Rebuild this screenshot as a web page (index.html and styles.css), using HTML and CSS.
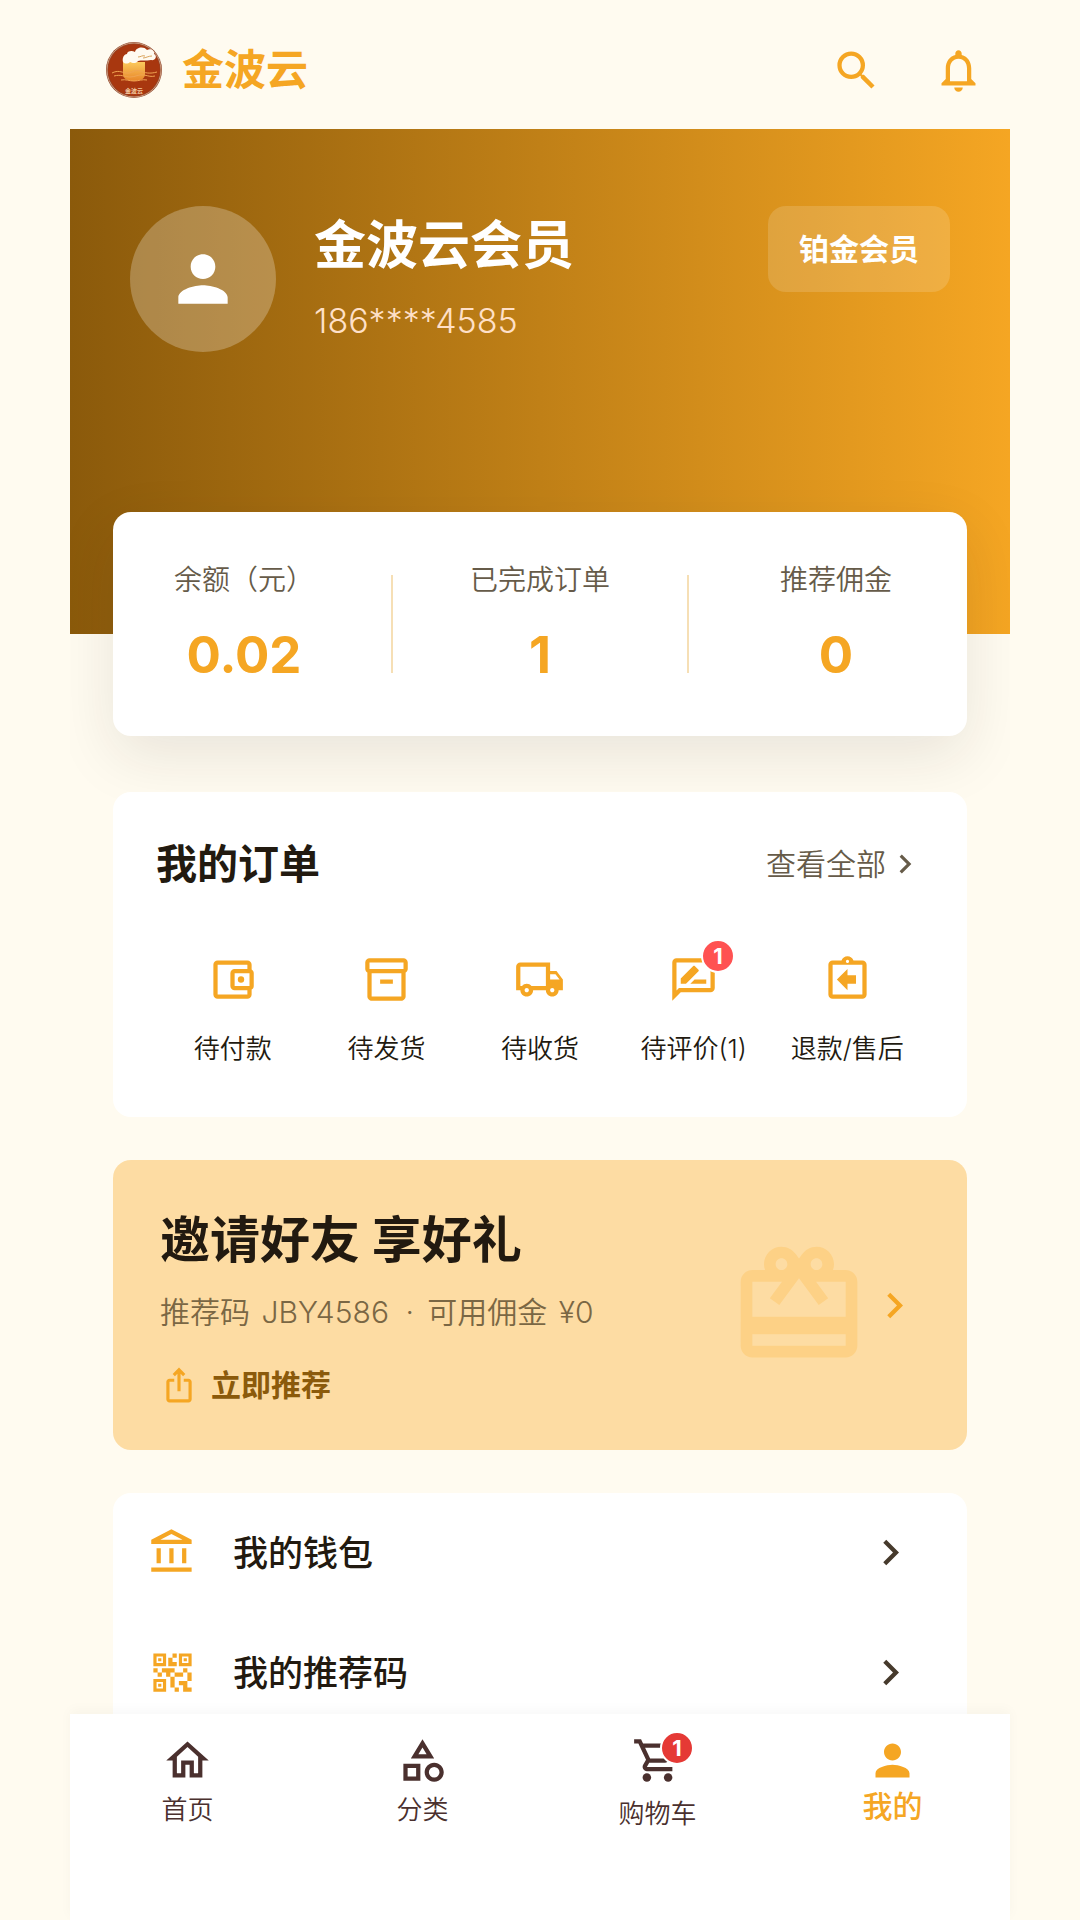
FILE: index.html
```html
<!DOCTYPE html>
<html lang="zh-CN">
<head>
<meta charset="utf-8">
<meta name="viewport" content="width=device-width, initial-scale=1">
<title>金波云 - 我的</title>
<link rel="stylesheet" href="styles.css">
</head>
<body>
<div class="app">
  <header class="topbar">
    <svg class="logo" viewBox="0 0 56 56" aria-hidden="true">
      <defs>
        <linearGradient id="sun" x1="0" y1="0" x2="0" y2="1">
          <stop offset="0" stop-color="#fbc95c"/>
          <stop offset="1" stop-color="#e8872a"/>
        </linearGradient>
      </defs>
      <circle cx="28" cy="28" r="28" fill="#8f4a30"/>
      <circle cx="28" cy="28" r="27" fill="none" stroke="#d09a7c" stroke-width="1"/>
      <circle cx="28" cy="28" r="26" fill="#a8370f"/>
      <path d="M17 20h22v12c0 5-5 7-11 7s-11-2-11-7z" fill="url(#sun)"/>
      <path d="M17 20c-1-4 1-8 4-8 0-3 5-4 8-2 1-5 9-6 12-2 4-2 8 1 7 4 4 2 1 7-3 6-5 1-10 0-13 1-2 3-6 2-8 1-2 2-5 2-7 0z" fill="#fffaf0"/>
      <path d="M32 15c3 0 4-2 7-1m-2 2c3 0 5-2 9-2" fill="none" stroke="#d9a35c" stroke-width="1"/>
      <path d="M6 31c6-3 9-1 14 0 6 1 8-4 14-2 5 2 10 3 17 1M8 34c7-2 11 1 16 1 6 0 8-3 14-2 5 1 7 2 11 1M15 38c5-1 8 1 13 1s8-2 13-1" fill="none" stroke="#f0a452" stroke-width="1"/>
      <text class="logo-text" x="28" y="51" text-anchor="middle">金波云</text>
    </svg>
    <span class="brand">金波云</span>
    <div class="topbar-actions">
      <button class="icon-btn" type="button" aria-label="搜索">
        <svg class="icon" viewBox="0 0 24 24"><path d="M15.5 14h-.79l-.28-.27A6.47 6.47 0 0 0 16 9.5 6.5 6.5 0 1 0 9.5 16c1.61 0 3.09-.59 4.23-1.57l.27.28v.79l5 4.99L20.49 19l-4.99-5zm-6 0C7.01 14 5 11.99 5 9.5S7.01 5 9.5 5 14 7.01 14 9.5 11.99 14 9.5 14z"/></svg>
      </button>
      <button class="icon-btn" type="button" aria-label="通知">
        <svg class="icon" viewBox="0 0 24 24"><path d="M12 22c1.1 0 2-.9 2-2h-4c0 1.1.9 2 2 2zm6-6v-5c0-3.07-1.63-5.64-4.5-6.32V4c0-.83-.67-1.5-1.5-1.5s-1.5.67-1.5 1.5v.68C7.64 5.36 6 7.92 6 11v5l-2 2v1h16v-1l-2-2zm-2 1H8v-6c0-2.48 1.51-4.5 4-4.5s4 2.02 4 4.5v6z"/></svg>
      </button>
    </div>
  </header>

  <main class="content">
    <section class="hero">
      <div class="avatar">
        <svg viewBox="0 0 24 24" aria-hidden="true"><path d="M12 12c2.21 0 4-1.79 4-4s-1.79-4-4-4-4 1.79-4 4 1.79 4 4 4zm0 2c-2.67 0-8 1.34-8 4v2h16v-2c0-2.66-5.33-4-8-4z"/></svg>
      </div>
      <div class="profile">
        <h1 class="profile-name">金波云会员</h1>
        <p class="profile-phone">186****4585</p>
      </div>
      <span class="level">铂金会员</span>
    </section>

    <section class="card stats">
      <div class="stat"><span class="stat-label">余额（元）</span><strong class="stat-value">0.02</strong></div>
      <span class="stat-divider"></span>
      <div class="stat"><span class="stat-label">已完成订单</span><strong class="stat-value">1</strong></div>
      <span class="stat-divider"></span>
      <div class="stat"><span class="stat-label">推荐佣金</span><strong class="stat-value">0</strong></div>
    </section>

    <section class="card orders">
      <div class="orders-head">
        <h2 class="orders-title">我的订单</h2>
        <a class="orders-more" href="#">查看全部
          <svg viewBox="0 0 24 24" aria-hidden="true"><path d="M10 6L8.59 7.41 13.17 12l-4.58 4.59L10 18l6-6z"/></svg>
        </a>
      </div>
      <nav class="orders-grid">
        <a class="order-item" href="#">
          <svg class="icon" viewBox="0 0 24 24" aria-hidden="true"><path d="M21 7.28V5c0-1.1-.9-2-2-2H5c-1.11 0-2 .9-2 2v14c0 1.1.89 2 2 2h14c1.1 0 2-.9 2-2v-2.28c.59-.35 1-.98 1-1.72V9c0-.74-.41-1.37-1-1.72zM20 9v6h-7V9h7zM5 19V5h14v2h-6c-1.1 0-2 .9-2 2v6c0 1.1.9 2 2 2h6v2H5z"/><circle cx="16" cy="12" r="1.5"/></svg>
          <span>待付款</span>
        </a>
        <a class="order-item" href="#">
          <svg class="icon" viewBox="0 0 24 24" aria-hidden="true"><path d="M20 2H4c-1 0-2 .9-2 2v3.01c0 .72.43 1.34 1 1.69V20c0 1.1 1.1 2 2 2h14c.9 0 2-.9 2-2V8.7c.57-.35 1-.97 1-1.69V4c0-1.1-1-2-2-2zm-1 18H5V9h14v11zm1-13H4V4h16v3z"/><path d="M9 12h6v2H9z"/></svg>
          <span>待发货</span>
        </a>
        <a class="order-item" href="#">
          <svg class="icon" viewBox="0 0 24 24" aria-hidden="true"><path d="M20 8h-3V4H3c-1.1 0-2 .9-2 2v11h2c0 1.66 1.34 3 3 3s3-1.34 3-3h6c0 1.66 1.34 3 3 3s3-1.34 3-3h2v-5l-3-4zm-.5 1.5l1.96 2.5H17V9.5h2.5zM6 18c-.55 0-1-.45-1-1s.45-1 1-1 1 .45 1 1-.45 1-1 1zm2.22-3c-.55-.61-1.33-1-2.22-1s-1.67.39-2.22 1H3V6h12v9H8.22zM18 18c-.55 0-1-.45-1-1s.45-1 1-1 1 .45 1 1-.45 1-1 1z"/></svg>
          <span>待收货</span>
        </a>
        <a class="order-item" href="#">
          <span class="badge-anchor">
            <svg class="icon" viewBox="0 0 24 24" aria-hidden="true"><path d="M20 2H4c-1.1 0-1.99.9-1.99 2L2 22l4-4h14c1.1 0 2-.9 2-2V4c0-1.1-.9-2-2-2zm0 14H5.17L4 17.17V4h16v12zM10.5 14H18v-2h-5.5zm3.86-5.87c.2-.2.2-.51 0-.71l-1.77-1.77c-.2-.2-.51-.2-.71 0L6 11.53V14h2.47l5.89-5.87z"/></svg>
            <b class="badge badge-order">1</b>
          </span>
          <span>待评价(1)</span>
        </a>
        <a class="order-item" href="#">
          <svg class="icon" viewBox="0 0 24 24" aria-hidden="true"><path d="M16 10h-4V7l-5 5 5 5v-3h4z"/><path d="M19 3h-4.18C14.4 1.84 13.3 1 12 1s-2.4.84-2.82 2H5c-1.1 0-2 .9-2 2v14c0 1.1.9 2 2 2h14c1.1 0 2-.9 2-2V5c0-1.1-.9-2-2-2zm-7-.25c.41 0 .75.34.75.75s-.34.75-.75.75-.75-.34-.75-.75.34-.75.75-.75zM19 19H5V5h14v14z"/></svg>
          <span>退款/售后</span>
        </a>
      </nav>
    </section>

    <a class="card invite" href="#">
      <div class="invite-body">
        <h2 class="invite-title">邀请好友 享好礼</h2>
        <p class="invite-sub">推荐码 <span class="invite-code">JBY4586</span> <span class="invite-dot">·</span> 可用佣金 <span class="invite-code">¥0</span></p>
        <span class="invite-action">
          <svg viewBox="0 0 24 24" aria-hidden="true"><path d="M16 5l-1.42 1.42-1.59-1.59V16h-1.98V4.83L9.42 6.42 8 5l4-4 4 4zm4 5v11c0 1.1-.9 2-2 2H6c-1.11 0-2-.9-2-2V10c0-1.11.89-2 2-2h3v2H6v11h12V10h-3V8h3c1.1 0 2 .89 2 2z"/></svg>
          立即推荐
        </span>
      </div>
      <svg class="invite-gift" viewBox="0 0 24 24" aria-hidden="true"><path d="M20 6h-2.18c.11-.31.18-.65.18-1 0-1.66-1.34-3-3-3-1.05 0-1.96.54-2.5 1.35l-.5.67-.5-.68C10.96 2.54 10.05 2 9 2 7.34 2 6 3.34 6 5c0 .35.07.69.18 1H4c-1.11 0-1.99.89-1.99 2L2 19c0 1.11.89 2 2 2h16c1.11 0 2-.89 2-2V8c0-1.11-.89-2-2-2zm-5-2c.55 0 1 .45 1 1s-.45 1-1 1-1-.45-1-1 .45-1 1-1zM9 4c.55 0 1 .45 1 1s-.45 1-1 1-1-.45-1-1 .45-1 1-1zm11 15H4v-2h16v2zm0-5H4V8h5.08L7 10.83 8.62 12 12 7.4l3.38 4.6L17 10.83 14.92 8H20v6z"/></svg>
      <svg class="icon" viewBox="0 0 24 24" aria-hidden="true"><path d="M10 6L8.59 7.41 13.17 12l-4.58 4.59L10 18l6-6z"/></svg>
    </a>

    <section class="card menu">
      <a class="menu-row" href="#">
        <svg class="icon" viewBox="0 0 24 24" aria-hidden="true"><path d="M6.5 10h-2v7h2v-7zm6 0h-2v7h2v-7zm8.5 9H2v2h19v-2zm-2.5-9h-2v7h2v-7zm-7-6.74L16.71 6H6.29l5.21-2.74m0-2.26L2 6v2h19V6l-9.5-5z"/></svg>
        <span class="menu-label">我的钱包</span>
        <svg class="icon menu-arrow" viewBox="0 0 24 24" aria-hidden="true"><path d="M10 6L8.59 7.41 13.17 12l-4.58 4.59L10 18l6-6z"/></svg>
      </a>
      <a class="menu-row" href="#">
        <svg class="icon" viewBox="0 0 24 24" aria-hidden="true"><path d="M15 21h-2v-2h2v2zm-2-7h-2v5h2v-5zm8-2h-2v4h2v-4zm-2-2h-2v2h2v-2zM7 12H5v2h2v-2zm-2-2H3v2h2v-2zm7-5h2V3h-2v2zm-7.5-.5v3h3v-3h-3zM9 9H3V3h6v6zm-4.5 7.5v3h3v-3h-3zM9 21H3v-6h6v6zm7.5-16.5v3h3v-3h-3zM21 9h-6V3h6v6zm-2 10v-3h-4v2h2v3h4v-2h-2zm-2-7h-4v2h4v-2zm-4-2H7v2h2v2h2v-2h2v-2zm1-1V7h-2V5h-2v4h4zM6.75 5.25h-1.5v1.5h1.5v-1.5zm0 12h-1.5v1.5h1.5v-1.5zm12-12h-1.5v1.5h1.5v-1.5z"/></svg>
        <span class="menu-label">我的推荐码</span>
        <svg class="icon menu-arrow" viewBox="0 0 24 24" aria-hidden="true"><path d="M10 6L8.59 7.41 13.17 12l-4.58 4.59L10 18l6-6z"/></svg>
      </a>
    </section>
  </main>

  <nav class="tabbar">
    <a class="tab" href="#">
      <svg class="icon" viewBox="0 0 24 24" aria-hidden="true"><path d="M12 5.69l5 4.5V18h-2v-6H9v6H7v-7.81l5-4.5M12 3L2 12h3v8h6v-6h2v6h6v-8h3L12 3z"/></svg>
      <span>首页</span>
    </a>
    <a class="tab" href="#">
      <svg class="icon" viewBox="0 0 24 24" aria-hidden="true"><path d="M12 2l-5.5 9h11L12 2zm0 3.84L13.93 9h-3.87L12 5.84zM17.5 13c-2.49 0-4.5 2.01-4.5 4.5s2.01 4.5 4.5 4.5 4.5-2.01 4.5-4.5-2.01-4.5-4.5-4.5zm0 7a2.5 2.5 0 0 1 0-5 2.5 2.5 0 0 1 0 5zM3 21.500h8v-8H3v8zm2-6h4v4H5v-4z"/></svg>
      <span>分类</span>
    </a>
    <a class="tab tab-cart" href="#">
      <span class="badge-anchor">
        <svg class="icon" viewBox="0 0 24 24" aria-hidden="true"><path d="M15.55 13c.75 0 1.41-.41 1.75-1.03l3.58-6.49A.996.996 0 0 0 20.01 4H5.21l-.94-2H1v2h2l3.6 7.59-1.35 2.44C4.52 15.37 5.48 17 7 17h12v-2H7l1.1-2h7.45zM6.16 6h12.15l-2.76 5H8.53L6.16 6z"/><circle cx="7" cy="20" r="2"/><circle cx="17" cy="20" r="2"/></svg>
        <b class="badge badge-cart">1</b>
      </span>
      <span>购物车</span>
    </a>
    <a class="tab tab-active" href="#" aria-current="page">
      <svg class="icon" viewBox="0 0 24 24" aria-hidden="true"><path d="M12 12c2.21 0 4-1.79 4-4s-1.79-4-4-4-4 1.79-4 4 1.79 4 4 4zm0 2c-2.67 0-8 1.34-8 4v2h16v-2c0-2.66-5.33-4-8-4z"/></svg>
      <span>我的</span>
    </a>
  </nav>
</div>
</body>
</html>
```

FILE: styles.css
```css
:root {
  --gold: #f5a623;
  --brown: #8b5a0b;
  --ink: #221a10;
  --muted: #665b49;
  --page: #fffbf0;
}

* {
  box-sizing: border-box;
}

body {
  margin: 0;
  background: var(--page);
  color: var(--ink);
  font-family: Inter, "Noto Sans CJK SC", sans-serif;
  font-weight: 350;
}

h1,
h2,
p {
  margin: 0;
}

a {
  color: inherit;
  text-decoration: none;
}

svg {
  display: block;
  flex: none;
  fill: currentColor;
}

.app {
  display: flex;
  flex-direction: column;
  max-width: 940px;
  height: 100vh;
  margin: 0 auto;
}

.icon {
  width: 51px;
  height: 51px;
}

/* Top bar */
.topbar {
  display: flex;
  align-items: center;
  flex: none;
  gap: 20px;
  padding: 39px 26px 28px 36px;
  color: var(--gold);
}

.logo {
  width: 56px;
  height: 56px;
}

.logo-text {
  fill: #f3c9a0;
  font-size: 6px;
  font-weight: 700;
}

.brand {
  font-size: 42px;
  line-height: 62px;
  font-weight: 700;
}

.topbar-actions {
  display: flex;
  gap: 51px;
  margin-left: auto;
}

.icon-btn {
  padding: 0;
  border: 0;
  background: none;
  color: inherit;
  cursor: pointer;
}

/* Scrolling content */
.content {
  flex: 1;
  min-height: 0;
  overflow-y: auto;
  scrollbar-width: none;
}

.hero {
  display: flex;
  align-items: flex-start;
  padding: 77px 60px 282px;
  background: linear-gradient(90deg, var(--brown), var(--gold));
  color: #fff;
}

.avatar {
  display: flex;
  align-items: center;
  justify-content: center;
  flex: none;
  width: 146px;
  height: 146px;
  border-radius: 50%;
  background: rgba(255, 255, 255, 0.25);
}

.avatar svg {
  width: 74px;
  height: 74px;
}

.profile {
  flex: 1;
  margin-left: 38px;
}

.profile-name {
  font-size: 52px;
  line-height: 80px;
  font-weight: 700;
}

.profile-phone {
  margin-top: 13px;
  color: #ffe0c8;
  font-size: 34px;
  line-height: 44px;
  font-weight: 300;
}

.level {
  padding: 22px 31px;
  border-radius: 18px;
  background: rgba(255, 255, 255, 0.15);
  font-size: 30px;
  line-height: 42px;
  font-weight: 700;
}

/* Cards */
.card {
  margin: 43px 43px 0;
  border-radius: 18px;
  background: #fff;
}

.stats {
  display: flex;
  align-items: center;
  justify-content: space-between;
  position: relative;
  margin-top: -122px;
  padding: 48px 61px 49px;
  box-shadow: 0 20px 60px rgba(40, 30, 30, 0.1);
}

.stat {
  display: flex;
  flex-direction: column;
  align-items: center;
  gap: 23px;
  min-width: 140px;
}

.stat-label {
  color: var(--muted);
  font-size: 28px;
  line-height: 40px;
}

.stat-value {
  color: var(--gold);
  font-size: 51px;
  line-height: 64px;
  font-weight: 700;
}

.stat-divider {
  width: 2px;
  height: 98px;
  background: #f6dfb5;
}

/* Orders */
.orders {
  position: relative;
  margin-top: 56px;
  padding: 43px 43px 50px;
}

.orders-head {
  display: flex;
  align-items: center;
  justify-content: space-between;
  margin-bottom: 61px;
}

.orders-title {
  font-size: 41px;
  line-height: 58px;
  font-weight: 700;
}

.orders-more {
  display: flex;
  align-items: center;
  color: var(--muted);
  font-size: 30px;
  line-height: 44px;
}

.orders-more svg {
  width: 38px;
  height: 38px;
}

.orders-grid {
  display: grid;
  grid-template-columns: repeat(5, 1fr);
}

.order-item {
  display: flex;
  flex-direction: column;
  align-items: center;
  gap: 26px;
  font-size: 26px;
  line-height: 36px;
  white-space: nowrap;
}

.order-item .icon {
  color: var(--gold);
}

.badge-anchor {
  position: relative;
}

.badge {
  position: absolute;
  top: -15px;
  right: -16px;
  width: 34px;
  height: 34px;
  border: 2px solid #fff;
  border-radius: 50%;
  color: #fff;
  font-size: 22px;
  line-height: 30px;
  font-weight: 700;
  text-align: center;
}

.badge-order {
  background: #ff5252;
}

.badge-cart {
  top: -4px;
  right: -11px;
  background: #e53935;
}

/* Invitation */
.invite {
  display: flex;
  align-items: center;
  padding: 45px 47px;
  background: #fddca3;
}

.invite .icon {
  color: var(--gold);
}

.invite-body {
  flex: 1;
  padding-top: 5px;
}

.invite-title {
  font-size: 50px;
  line-height: 60px;
  font-weight: 700;
}

.invite-sub {
  margin-top: 20px;
  color: #7a6744;
  font-size: 30px;
  line-height: 44px;
}

.invite-code {
  padding: 0 3px;
}

.invite-dot {
  padding: 0 5px;
}

.invite-action {
  display: flex;
  align-items: center;
  gap: 13px;
  margin-top: 31px;
  color: var(--brown);
  font-size: 30px;
  line-height: 40px;
  font-weight: 700;
}

.invite-action svg {
  width: 38px;
  height: 38px;
  color: var(--gold);
}

.invite-gift {
  width: 140px;
  height: 140px;
  color: #fdd186;
}

/* Menu */
.menu-row {
  display: flex;
  align-items: center;
  gap: 35px;
  padding: 34px 51px 35px 34px;
}

.menu-row .icon {
  color: var(--gold);
}

.menu-row .menu-arrow {
  color: #463a2c;
}

.menu-label {
  flex: 1;
  font-size: 35px;
  line-height: 50px;
  font-weight: 500;
}

/* Bottom tabs */
.tabbar {
  display: grid;
  grid-template-columns: repeat(4, 1fr);
  flex: none;
  position: relative;
  padding: 21px 0 86px;
  background: #fff;
  box-shadow: 0 -4px 12px rgba(0, 0, 0, 0.03);
}

.tab {
  display: flex;
  flex-direction: column;
  align-items: center;
  gap: 4px;
  color: #4a302e;
  font-size: 26px;
  line-height: 40px;
}

.tab-cart {
  gap: 8px;
}

.tab-active {
  gap: 0;
  color: var(--gold);
  font-size: 30px;
  font-weight: 500;
}
```
